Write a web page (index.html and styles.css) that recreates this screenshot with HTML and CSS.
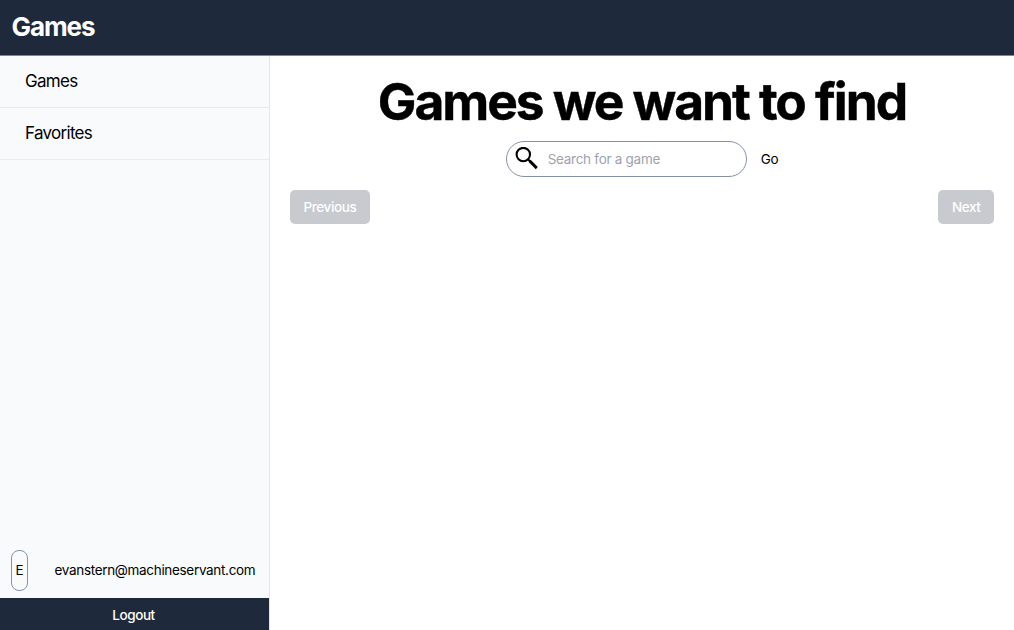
FILE: index.html
```html
<!DOCTYPE html>
<html lang="en">
<head>
<meta charset="utf-8">
<title>Games</title>
<link rel="stylesheet" href="styles.css">
</head>
<body>
<header class="topbar"><span class="brand">Games</span></header>
<div class="layout">
  <aside class="sidebar">
    <nav class="nav">
      <a class="nav-item">Games</a>
      <a class="nav-item">Favorites</a>
    </nav>
    <div class="user">
      <span class="avatar">E</span>
      <span class="email">evanstern@machineservant.com</span>
    </div>
    <button class="logout"><span class="logout-label">Logout</span></button>
  </aside>
  <main class="main">
    <h1 class="title"><span class="title-text">Games we want to find</span></h1>
    <form class="search">
      <label class="field">
        <svg class="icon" viewBox="0 0 24 24" fill="none" stroke="#000"><circle cx="8.3" cy="7.6" r="6.7" stroke-width="2.1"/><path d="M13 12.3l2.4 2.4" stroke-width="2"/><path d="M14.6 13.9l7.2 7.2" stroke-width="2.9"/></svg>
        <span class="placeholder">Search for a game</span>
      </label>
      <span class="go">Go</span>
    </form>
    <div class="pager">
      <button class="page-btn"><span class="prev-label">Previous</span></button>
      <button class="page-btn"><span class="next-label">Next</span></button>
    </div>
  </main>
</div>
</body>
</html>
```

FILE: styles.css
```css
* { box-sizing: border-box; }
body { margin: 0; height: 630px; display: flex; flex-direction: column; overflow: hidden; background: #fff; color: #000; font: 13.5px/20px Inter, sans-serif; letter-spacing: -0.28px; }
button { border: 0; font: inherit; letter-spacing: inherit; color: #fff; }
.topbar { height: 56px; padding: 11px 11.5px; border-bottom: 1px solid #7d8591; background: #1e293b; color: #fff; }
.brand { font-size: 26px; line-height: 32px; font-weight: 700; letter-spacing: -1.1px; }
.layout { flex: 1; display: flex; min-height: 0; }
.sidebar { width: 270px; display: flex; flex-direction: column; background: #f8fafc; border-right: 1px solid #e5e7eb; }
.nav { flex: 1; }
.nav-item { display: block; height: 52px; padding: 13px 25px; border-bottom: 1px solid #e8eaed; font-size: 17px; line-height: 24px; letter-spacing: -0.7px; }
.user { display: flex; align-items: center; height: 56px; padding-left: 11px; }
.avatar { width: 17px; height: 41px; margin-right: 26.5px; border: 1px solid #8592a6; border-radius: 8px; line-height: 38px; text-align: center; }
.email { letter-spacing: -0.32px; }
.logout { height: 32px; padding: 2px 2px 0 0; background: #1e293b; font-weight: 500; letter-spacing: -0.4px; }
.main { flex: 1; padding: 19px 20px 0; }
.title { margin: 0; text-align: center; font-size: 51.5px; line-height: 53px; font-weight: 700; letter-spacing: -2.05px; -webkit-text-stroke: 0.4px #000; }
.search { display: flex; justify-content: center; align-items: center; margin-top: 13px; }
.field { display: flex; align-items: center; width: 241px; height: 36px; padding-left: 8px; border: 1px solid #8592a6; border-radius: 18px; }
.icon { width: 24px; height: 24px; margin-right: 9px; }
.placeholder { color: #9ca3af; }
.go { margin-left: 14px; }
.pager { display: flex; justify-content: space-between; margin-top: 13px; }
.page-btn { height: 34px; padding: 0 13.5px; border-radius: 5px; background: #c7cace; font-weight: 500; letter-spacing: -0.4px; }
```
